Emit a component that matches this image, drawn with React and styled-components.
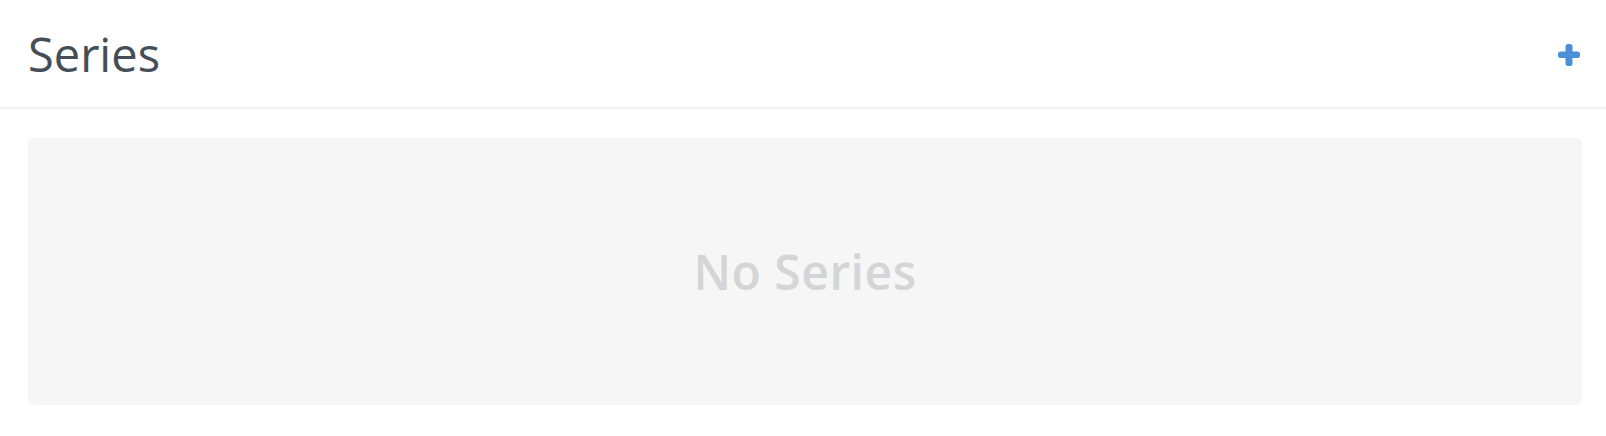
import React from "react";
import styled, { createGlobalStyle } from "styled-components";

const GlobalStyle = createGlobalStyle`
  html, body {
    margin: 0;
    padding: 0;
    background: #ffffff;
  }
  body {
    font-family: "Open Sans", "Noto Sans", sans-serif;
  }
`;

const Page = styled.div`
  width: 1606px;
  height: 436px;
  display: flex;
  flex-direction: column;
  background: #ffffff;
`;

const Header = styled.header`
  height: 107px;
  display: flex;
  align-items: center;
  justify-content: space-between;
  padding: 0 26px 0 28px;
  border-bottom: 2px solid #f2f2f2;
  box-sizing: content-box;
`;

const Title = styled.h2`
  margin: 0;
  font-size: 47px;
  font-weight: 400;
  color: #434e57;
  letter-spacing: 0;
`;

const AddButton = styled.button`
  border: 0;
  padding: 0;
  background: transparent;
  width: 22px;
  height: 22px;
  display: flex;
  align-items: center;
  justify-content: center;
  cursor: pointer;
  margin-top: 2px;
`;

const Body = styled.main`
  flex: 1;
  padding: 29px 24px 31px 28px;
  display: flex;
`;

const EmptyPanel = styled.div`
  flex: 1;
  background: #f6f6f6;
  border-radius: 5px;
  display: flex;
  align-items: center;
  justify-content: center;
`;

const EmptyText = styled.span`
  font-size: 48px;
  font-weight: 600;
  letter-spacing: 0.5px;
  color: #d4d5d6;
`;

function PlusIcon() {
  return (
    <svg width="22" height="22" viewBox="0 0 22 22" aria-hidden="true">
      <rect x="7.5" y="0" width="7" height="22" rx="2.5" fill="#4a90d9" />
      <rect x="0" y="7.5" width="22" height="6.5" rx="2.5" fill="#4a90d9" />
    </svg>
  );
}

export default function App() {
  return (
    <>
      <GlobalStyle />
      <Page>
        <Header>
          <Title>Series</Title>
          <AddButton aria-label="Add series">
            <PlusIcon />
          </AddButton>
        </Header>
        <Body>
          <EmptyPanel>
            <EmptyText>No Series</EmptyText>
          </EmptyPanel>
        </Body>
      </Page>
    </>
  );
}
